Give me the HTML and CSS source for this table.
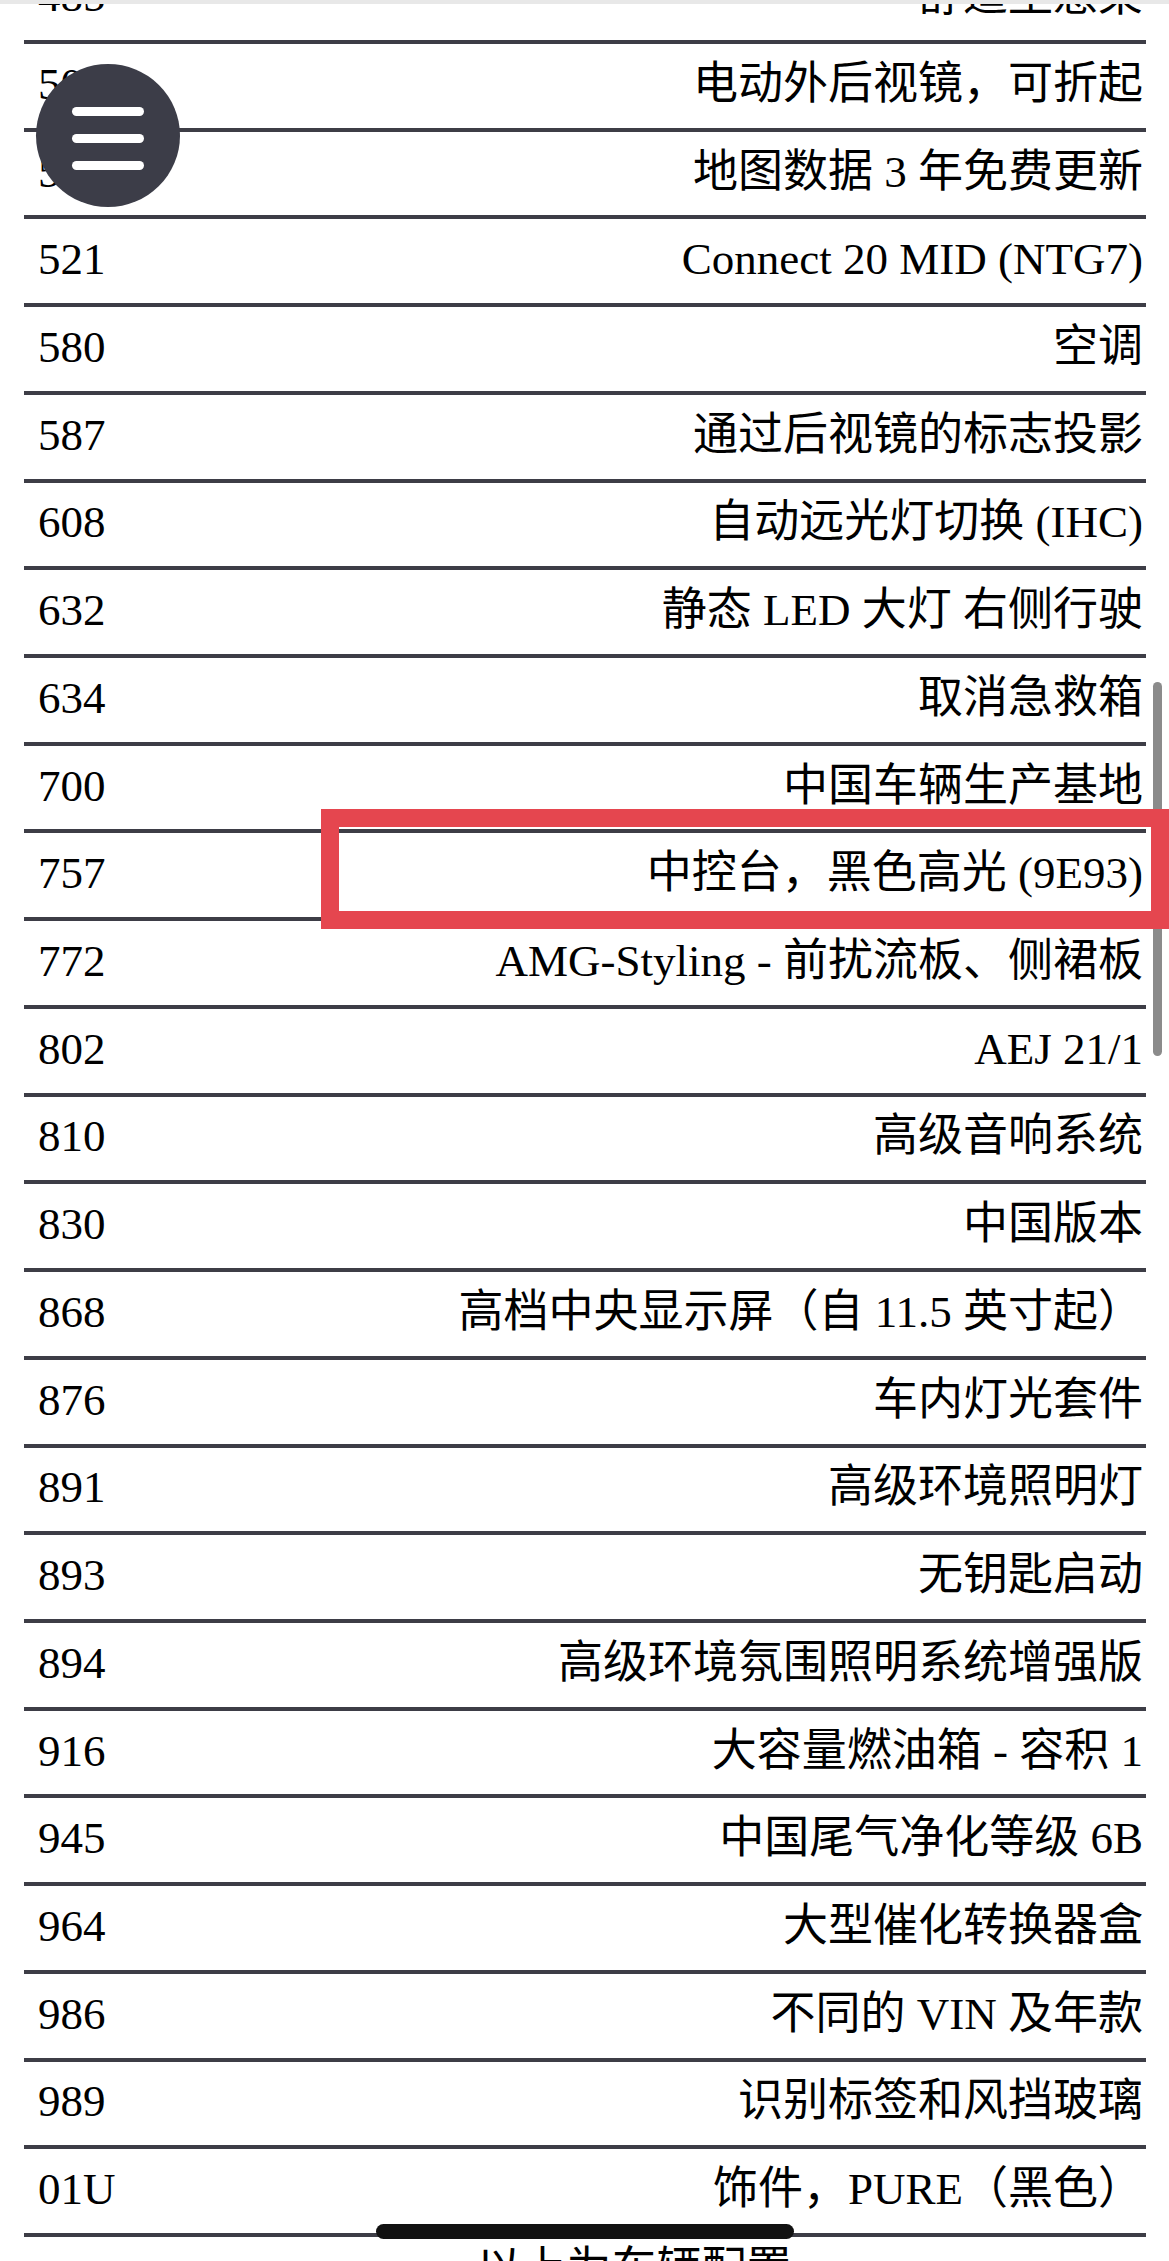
FILE: index.html
```html
<!DOCTYPE html>
<html lang="zh-CN">
<head>
<meta charset="utf-8">
<title>车辆配置代码</title>
<link rel="stylesheet" href="styles.css">
</head>
<body>
<div class="topbar"></div>

<div class="options">
  <div class="row"><span class="code">485</span><span class="desc">舒适型悬架</span></div>
  <div class="row"><span class="code">500</span><span class="desc">电动外后视镜，可折起</span></div>
  <div class="row"><span class="code">513</span><span class="desc">地图数据 3 年免费更新</span></div>
  <div class="row"><span class="code">521</span><span class="desc">Connect 20 MID (NTG7)</span></div>
  <div class="row"><span class="code">580</span><span class="desc">空调</span></div>
  <div class="row"><span class="code">587</span><span class="desc">通过后视镜的标志投影</span></div>
  <div class="row"><span class="code">608</span><span class="desc">自动远光灯切换 (IHC)</span></div>
  <div class="row"><span class="code">632</span><span class="desc">静态 LED 大灯 右侧行驶</span></div>
  <div class="row"><span class="code">634</span><span class="desc">取消急救箱</span></div>
  <div class="row"><span class="code">700</span><span class="desc">中国车辆生产基地</span></div>
  <div class="row"><span class="code">757</span><span class="desc">中控台，黑色高光 (9E93)</span></div>
  <div class="row"><span class="code">772</span><span class="desc">AMG-Styling - 前扰流板、侧裙板</span></div>
  <div class="row"><span class="code">802</span><span class="desc">AEJ 21/1</span></div>
  <div class="row"><span class="code">810</span><span class="desc">高级音响系统</span></div>
  <div class="row"><span class="code">830</span><span class="desc">中国版本</span></div>
  <div class="row"><span class="code">868</span><span class="desc">高档中央显示屏（自 11.5 英寸起）</span></div>
  <div class="row"><span class="code">876</span><span class="desc">车内灯光套件</span></div>
  <div class="row"><span class="code">891</span><span class="desc">高级环境照明灯</span></div>
  <div class="row"><span class="code">893</span><span class="desc">无钥匙启动</span></div>
  <div class="row"><span class="code">894</span><span class="desc">高级环境氛围照明系统增强版</span></div>
  <div class="row"><span class="code">916</span><span class="desc">大容量燃油箱 - 容积 1</span></div>
  <div class="row"><span class="code">945</span><span class="desc">中国尾气净化等级 6B</span></div>
  <div class="row"><span class="code">964</span><span class="desc">大型催化转换器盒</span></div>
  <div class="row"><span class="code">986</span><span class="desc">不同的 VIN 及年款</span></div>
  <div class="row"><span class="code">989</span><span class="desc">识别标签和风挡玻璃</span></div>
  <div class="row"><span class="code">01U</span><span class="desc">饰件，PURE（黑色）</span></div>
</div>

<div class="more">以上为车辆配置</div>

<div class="highlight"></div>
<div class="scroll-thumb"></div>

<button class="menu-btn" type="button" aria-label="菜单">
  <span class="bar"></span>
  <span class="bar"></span>
  <span class="bar"></span>
</button>

<div class="home-indicator"></div>
</body>
</html>
```

FILE: styles.css
```css
html, body {
  margin: 0;
  padding: 0;
  background: #ffffff;
  overflow: hidden;
}

body {
  position: relative;
  width: 1169px;
  height: 2261px;
  font-family: "Liberation Serif", "Noto Sans CJK SC", serif;
  color: #000000;
}

.topbar {
  position: absolute;
  top: 0;
  left: 0;
  right: 0;
  height: 4px;
  background: #e8e8e8;
  z-index: 5;
}

.options {
  margin: -43.72px 0 0 24px;
  width: 1122px;
}

.row {
  box-sizing: border-box;
  display: flex;
  justify-content: space-between;
  align-items: center;
  height: 87.72px;
  padding: 0 3px 3px 14px;
  border-bottom: 4px solid #3d3d46;
  font-size: 45px;
  line-height: 1;
}

.code,
.desc {
  white-space: nowrap;
}

.desc {
  text-align: right;
}

.more {
  margin: 10px 0 0 24px;
  width: 1122px;
  box-sizing: border-box;
  padding-left: 98px;
  text-align: center;
  font-size: 45px;
  line-height: 1;
  white-space: nowrap;
}

.highlight {
  position: absolute;
  left: 321px;
  top: 809px;
  width: 848px;
  height: 120px;
  box-sizing: border-box;
  border: 18px solid #e5464f;
  z-index: 3;
}

.scroll-thumb {
  position: absolute;
  left: 1153px;
  top: 682px;
  width: 9px;
  height: 374px;
  border-radius: 5px;
  background: #8b8b8b;
  z-index: 2;
}

.menu-btn {
  position: absolute;
  left: 36px;
  top: 64px;
  width: 144px;
  height: 143px;
  margin: 0;
  padding: 6px 0 0 0;
  border: none;
  border-radius: 50%;
  background: #3c3d48;
  display: flex;
  flex-direction: column;
  align-items: center;
  justify-content: center;
  gap: 18px;
  z-index: 4;
}

.bar {
  display: block;
  width: 72px;
  height: 9px;
  border-radius: 5px;
  background: #ffffff;
}

.home-indicator {
  position: absolute;
  left: 376px;
  top: 2224px;
  width: 418px;
  height: 15px;
  border-radius: 8px;
  background: #111111;
  z-index: 6;
}
```
